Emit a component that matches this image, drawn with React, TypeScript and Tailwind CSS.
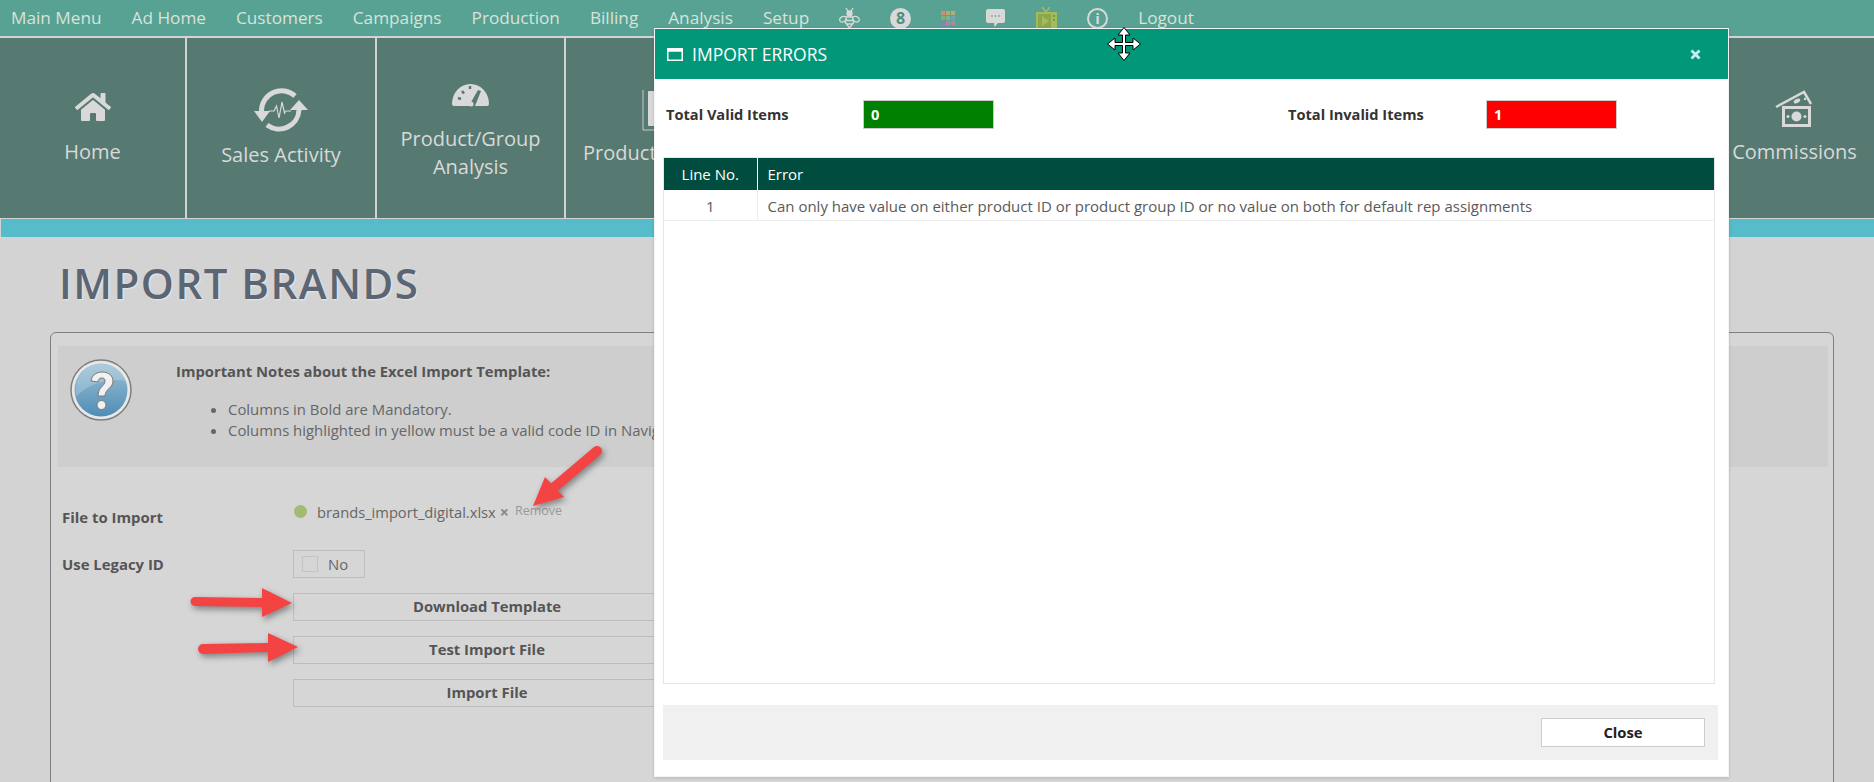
import { FaHome } from 'react-icons/fa';

const font = "font-['Open_Sans','Noto_Sans',sans-serif]";

const navLeft = ['Main Menu', 'Ad Home', 'Customers', 'Campaigns', 'Production', 'Billing', 'Analysis', 'Setup'];

function BeeIcon() {
	return (
		<svg viewBox="0 0 21 22" className="h-[22px] w-[21px] shrink-0" fill="none" stroke="#d9d9d9" strokeWidth="1.3">
			<path d="M7 1l2.500 4M14 1l-2.500 4" />
			<circle cx="10.500" cy="6.500" r="2.500" fill="#d9d9d9" />
			<path d="M8 10C2 8 0 12 1 14c1 2 5 1 7-2M13 10c6-2 8 2 7 4-1 2-5 1-7-2" />
			<path d="M7.500 10h6l1.500 5-4.500 6L6 15z" />
			<path d="M7 13.500h7M7.500 17h6" />
		</svg>
	);
}

function GridIcon() {
	const colors = ['#c98f7b', '#c9a06a', '#b7ad6c', '#7fae78', '#7fb08f', '#6fa3bd', '#8d7fb0', '#b57fae', '#c27fa0'];
	return (
		<div className="grid h-[14px] w-[14px] shrink-0 grid-cols-3 gap-[1px]">
			{colors.map((c, i) => (
				<span key={i} className="h-[4px] w-[4px]" style={{ backgroundColor: c }} />
			))}
		</div>
	);
}

function ChatIcon() {
	return (
		<svg viewBox="0 0 21 20" className="h-[20px] w-[21px] shrink-0">
			<path d="M3 1h15a2 2 0 0 1 2 2v10a2 2 0 0 1-2 2h-5l-3.500 4-.5-4H3a2 2 0 0 1-2-2V3a2 2 0 0 1 2-2z" fill="#d9d9d9" />
			<circle cx="7" cy="8" r="1" fill="#8fa89f" />
			<circle cx="10.500" cy="8" r="1" fill="#8fa89f" />
			<circle cx="14" cy="8" r="1" fill="#8fa89f" />
		</svg>
	);
}

function TvIcon() {
	return (
		<svg viewBox="0 0 21 24" className="h-[24px] w-[21px] shrink-0">
			<path d="M6 1l4 5 4-5" fill="none" stroke="#a3bb58" strokeWidth="1.500" />
			<rect x="0" y="6" width="21" height="18" rx="1" fill="#a3bb58" />
			<rect x="2" y="8" width="13" height="14" fill="#8aa64e" />
			<path d="M6 10l7 5-7 5z" fill="#a3bb58" />
			<circle cx="18" cy="10" r="1" fill="#6f8a3f" />
			<circle cx="18" cy="14" r="1" fill="#6f8a3f" />
		</svg>
	);
}

function InfoIcon() {
	return (
		<div className="flex h-[21px] w-[21px] shrink-0 items-center justify-center rounded-full border-2 border-[#d9d9d9] text-[15px] font-bold leading-none text-[#d9d9d9]">
			i
		</div>
	);
}

function SalesIcon() {
	return (
		<svg viewBox="0 0 54 44" className="h-[44px] w-[54px]" fill="none" stroke="#d9d9d9">
			<path d="M41 8A20 20 0 0 0 7.500 23" strokeWidth="5" />
			<path d="M13 37A20 20 0 0 0 45 22" strokeWidth="5" />
			<path d="M0 23h16l-8 11z" fill="#d9d9d9" stroke="none" />
			<path d="M36 22h18l-9-10z" fill="#d9d9d9" stroke="none" />
			<path d="M15 23h5l2.500-5 2.500 12 3-16 2.500 11 1.500-2h5" strokeWidth="1.200" />
		</svg>
	);
}

function GaugeIcon() {
	return (
		<svg viewBox="0 0 39 26" className="h-[26px] w-[39px]">
			<path d="M1 23A18.500 20 0 0 1 38 23a2 2 0 0 1-2 2H24l6-15-3-1-8 14-1 2H3a2 2 0 0 1-2-2z" fill="#d9d9d9" />
			<circle cx="20" cy="23" r="2.500" fill="#d9d9d9" />
			<path d="M7 17l3 1M11 10l2 2.500M19 5v3" stroke="#567a71" strokeWidth="2.500" />
		</svg>
	);
}

function BooksIcon() {
	return (
		<svg viewBox="0 0 36 41" className="h-[41px] w-[36px]" fill="none">
			<path d="M1 0v40h34" stroke="#c9c9c9" strokeWidth="1" />
			<rect x="6" y="1" width="8" height="35" rx="1" fill="#d9d9d9" />
			<rect x="16" y="8" width="8" height="28" rx="1" fill="#d9d9d9" />
		</svg>
	);
}

function MoneyIcon() {
	return (
		<svg viewBox="0 0 40 38" className="h-[38px] w-[40px]">
			<path d="M1 17L29 2l7 12" fill="none" stroke="#d9d9d9" strokeWidth="2.500" />
			<ellipse cx="22" cy="11" rx="3.500" ry="2" fill="#d9d9d9" transform="rotate(-28 22 11)" />
			<circle cx="30" cy="9" r="1.200" fill="#d9d9d9" />
			<rect x="7" y="16" width="29" height="21" fill="#d9d9d9" />
			<rect x="10" y="19" width="23" height="15" fill="#567a71" />
			<ellipse cx="21.500" cy="26.500" rx="5" ry="5" fill="#d9d9d9" />
			<circle cx="13" cy="26.500" r="1.500" fill="#d9d9d9" />
			<circle cx="30" cy="26.500" r="1.500" fill="#d9d9d9" />
		</svg>
	);
}

function HelpIcon() {
	return (
		<svg viewBox="0 0 62 62" className="h-[62px] w-[62px] shrink-0">
			<defs>
				<linearGradient id="helpBlue" x1="0" y1="0" x2="0" y2="1">
					<stop offset="0" stopColor="#9cc0d4" />
					<stop offset="1" stopColor="#4f8db5" />
				</linearGradient>
			</defs>
			<circle cx="31" cy="31" r="30" fill="#e8e8e8" stroke="#7f7f7f" strokeWidth="1.500" />
			<circle cx="31" cy="31" r="26.500" fill="url(#helpBlue)" />
			<path d="M6 38C16 26 38 18 57 22 52 10 42 5 31 5 16 5 3 18 6 38z" fill="#ffffff" opacity="0.2" />
			<path d="M21 22c1-7 7-9 11-9 7 0 11 4 11 9 0 7-8 8-8 15h-7c0-9 7-10 7-15 0-2-1-3-3-3-3 0-4 2-4 4z" fill="#f1f1f1" stroke="#777" strokeWidth="1" />
			<circle cx="31.500" cy="46" r="4.500" fill="#f1f1f1" stroke="#777" strokeWidth="1" />
		</svg>
	);
}

function RedArrow({ className, path, w, h }: { className: string; path: string; w: number; h: number }) {
	return (
		<svg viewBox={`0 0 ${w} ${h}`} width={w} height={h} className={`absolute drop-shadow-[2px_3px_3px_rgba(0,0,0,0.4)] ${className}`}>
			<path d={path} fill="#f44343" />
		</svg>
	);
}

function MoveCursor() {
	return (
		<svg viewBox="0 0 34 34" className="absolute left-[1107px] top-[27px] h-[34px] w-[34px]">
			<path
				d="M17 .5l6 7.500h-4.500v7.500H26V11l7.500 6-7.500 6v-4.500h-7.500V26H23l-6 7.500L11 26h4.500v-7.500H8V23L.5 17 8 11v4.500h7.500V8H11z"
				fill="#ffffff"
				stroke="#000000"
				strokeWidth="1"
			/>
		</svg>
	);
}

function Tile({ icon, lines, className = 'w-[189px]' }: { icon?: React.ReactNode; lines?: string[]; className?: string }) {
	return (
		<div className={`flex h-[180px] shrink-0 flex-col items-center justify-center border-r-2 border-[#d3d3d3] bg-[#567a71] text-[#d9d9d9] ${className}`}>
			{icon}
			{lines?.map((l) => (
				<div key={l} className="whitespace-nowrap text-[20px] leading-[28px]">
					{l}
				</div>
			))}
		</div>
	);
}

function FormButton({ label }: { label: string }) {
	return (
		<div className="flex h-[28px] w-[388px] items-center justify-center border border-[#bdbdbd] pb-[3px] text-[14.8px] font-bold text-[#555]">
			{label}
		</div>
	);
}

export default function App() {
	return (
		<div className={`${font} relative h-[782px] w-[1874px] overflow-hidden bg-[#d3d3d3]`}>
			<div className="flex h-[36px] items-center gap-[30px] bg-[#57a292] pl-[11px] text-[17.2px] text-[#d9e3dc]">
				{navLeft.map((n) => (
					<span key={n}>{n}</span>
				))}
				<BeeIcon />
				<div className="flex h-[21px] w-[21px] shrink-0 items-center justify-center rounded-full bg-[#d9d9d9] text-[16px] font-bold text-[#4f8f80]">8</div>
				<GridIcon />
				<ChatIcon />
				<TvIcon />
				<InfoIcon />
				<span>Logout</span>
			</div>
			<div className="mt-[2px] flex overflow-hidden">
				<Tile className="w-[187px]" icon={<FaHome className="mb-[15px] h-[32px] w-[36px]" />} lines={['Home']} />
				<Tile className="w-[190px]" icon={<div className="mb-[9px]"><SalesIcon /></div>} lines={['Sales Activity']} />
				<Tile className="w-[189px] pt-[5px]" icon={<div className="mb-[18px]"><GaugeIcon /></div>} lines={['Product/Group', 'Analysis']} />
				<Tile className="w-[190px]" icon={<div className="mb-[8px]"><BooksIcon /></div>} lines={['Product Analysis']} />
				<Tile />
				<Tile />
				<Tile />
				<Tile />
				<Tile />
				<Tile icon={<div className="mb-[10px]"><MoneyIcon /></div>} lines={['Commissions']} />
			</div>
			<div className="mt-[1px] h-[18px] border-l border-[#d3d3d3] bg-[#56bcc9]" />

			<h1 className="ml-[59px] mt-[18px] text-[42px] font-semibold leading-[56px] tracking-[1.5px] text-[#5b6573] [text-shadow:1px_1px_2px_rgba(255,255,255,0.5)]">
				IMPORT BRANDS
			</h1>

			<div className="ml-[50px] mt-[21px] h-[500px] w-[1784px] rounded-t-md border border-[#808080] bg-[#d6d6d6] px-[7px] pt-[13px]">
				<div className="flex h-[121px] w-[1770px] bg-[#cecece] pl-[12px] pt-[13px]">
					<HelpIcon />
					<div className="ml-[44px] pt-[1px] text-[14.9px] text-[#666]">
						<p className="text-[14.8px] font-bold leading-[22px] text-[#555]">Important Notes about the Excel Import Template:</p>
						<ul className="ml-[52px] mt-[17px] list-disc leading-[21px]">
							<li>Columns in Bold are Mandatory.</li>
							<li>Columns highlighted in yellow must be a valid code ID in Navigator.</li>
						</ul>
					</div>
				</div>

				<div className="mt-[29px] flex pl-[4px] text-[14.9px] text-[#555]">
					<div className="mt-[10px] w-[231px] font-bold">File to Import</div>
					<div className="mb-[1px] flex items-center">
						<span className="ml-[1px] mr-[10px] h-[13px] w-[13px] rounded-full bg-[#a3bb6e]" />
						<span className="text-[14.7px] text-[#666]">brands_import_digital.xlsx</span>
						<span className="ml-[4px] text-[16px] font-bold leading-none text-[#888]">×</span>
						<span className="ml-[6px] text-[12.5px] text-[#999]">Remove</span>
					</div>
				</div>

				<div className="mt-[22px] flex pl-[4px] text-[14.9px] text-[#555]">
					<div className="w-[231px] self-center font-bold">Use Legacy ID</div>
					<div className="flex h-[28px] w-[72px] items-center border border-[#bdbdbd] pl-[8px] text-[#666]">
						<span className="h-[16px] w-[16px] border border-[#c4c4c4]" />
						<span className="ml-[10px]">No</span>
					</div>
				</div>

				<div className="ml-[235px] mt-[15px] flex flex-col gap-[15px]">
					<FormButton label="Download Template" />
					<FormButton label="Test Import File" />
					<FormButton label="Import File" />
				</div>
			</div>

			<RedArrow className="left-[186px] top-[584px]" w={110} h={38} path="M9 13L76 14V4L106 19 76 33V23L9 22a4.500 4.500 0 0 1 0-9z" />
			<RedArrow className="left-[194px] top-[629px]" w={108} h={38} path="M9 15L74 14V4L104 18 74 33V23L9 25a5 5 0 0 1 0-10z" />
			<RedArrow className="left-[528px] top-[442px]" w={78} h={70} path="M65.700 5.200a5 5 0 0 1 6.600 7.600L29.800 48.800 36 55 5 64 17 35l6.200 6.200z" />

			<div className="absolute left-[654px] top-[28px] flex h-[749px] w-[1075px] flex-col border border-[#f4f4f4] bg-white shadow-[0_1px_3px_rgba(0,0,0,0.15)]">
				<div className="flex h-[50px] shrink-0 items-center bg-[#009879] pl-[12px] pr-[27px] text-white">
					<svg viewBox="0 0 16 13" className="h-[13px] w-[16px]">
						<rect x="0.750" y="0.750" width="14.500" height="11.500" fill="none" stroke="#fff" strokeWidth="1.500" />
						<rect x="0.750" y="0.750" width="14.500" height="3" fill="#fff" />
					</svg>
					<span className="ml-[9px] text-[17.5px]">IMPORT ERRORS</span>
					<svg viewBox="0 0 11 11" className="ml-auto h-[11px] w-[11px]">
						<path d="M1.500 1.500l8 8M9.500 1.500l-8 8" stroke="#c8eef0" strokeWidth="2.800" />
					</svg>
				</div>

				<div className="mt-[21px] flex items-center pl-[11px] text-[14.6px] font-bold text-[#333]">
					<div className="w-[197px]">Total Valid Items</div>
					<div className="flex h-[29px] w-[131px] items-center border border-[#ccc] bg-[#008000] pl-[7px] text-white">0</div>
					<div className="ml-[294px] w-[198px]">Total Invalid Items</div>
					<div className="flex h-[29px] w-[131px] items-center border border-[#ccc] bg-[#ff0000] pl-[7px] text-white">1</div>
				</div>

				<div className="ml-[8px] mt-[28px] h-[527px] w-[1052px] border border-[#e6e6e6]">
					<table className="w-full table-fixed border-collapse text-[15px]">
						<thead>
							<tr className="h-[32px] bg-[#004d40] text-white">
								<th className="w-[93px] border-r border-white text-center font-normal">Line No.</th>
								<th className="pl-[10px] text-left font-normal">Error</th>
							</tr>
						</thead>
						<tbody>
							<tr className="h-[30px] border-b border-[#eeeeee] text-[#5a5a5a]">
								<td className="border-r border-[#eeeeee] pt-[2px] text-center">1</td>
								<td className="pl-[10px] pt-[2px]">Can only have value on either product ID or product group ID or no value on both for default rep assignments</td>
							</tr>
						</tbody>
					</table>
				</div>

				<div className="ml-[8px] mt-[21px] flex h-[55px] w-[1055px] items-center justify-end bg-[#f0f0f0] pr-[13px]">
					<div className="flex h-[29px] w-[164px] items-center justify-center border border-[#ccc] bg-white pb-[1px] text-[14.8px] font-bold text-[#222]">
						Close
					</div>
				</div>
			</div>

			<MoveCursor />
		</div>
	);
}
